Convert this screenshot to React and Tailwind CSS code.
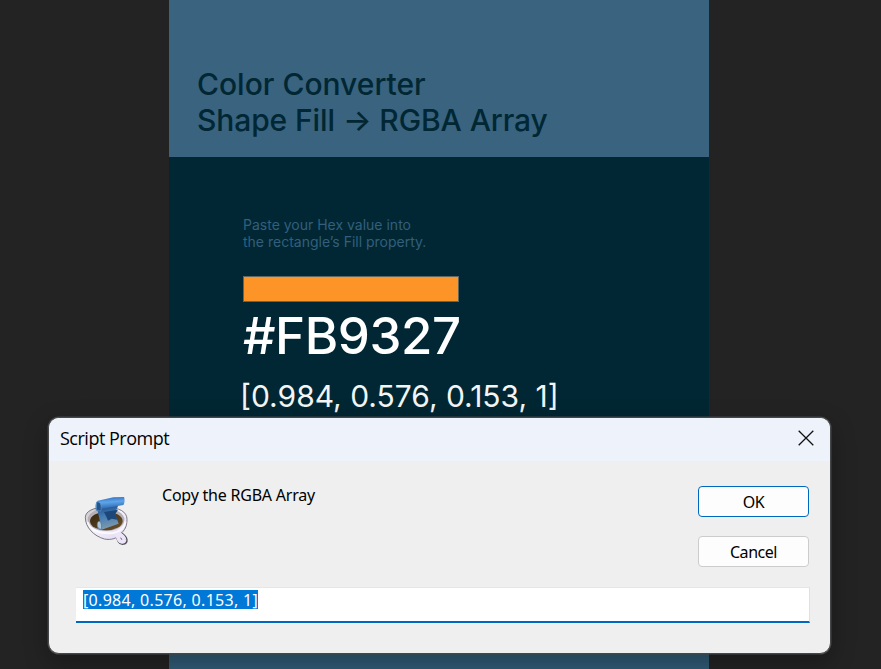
function CupIcon() {
  return (
    <svg width="64" height="70" viewBox="0 0 192 210" className="block">
      <defs>
        <linearGradient id="cup" x1="0" y1="0" x2="1" y2="1">
          <stop offset="0" stopColor="#c4c2c8" />
          <stop offset=".45" stopColor="#f6f3fd" />
          <stop offset="1" stopColor="#ddd5f0" />
        </linearGradient>
        <linearGradient id="roll" x1="0" y1="0" x2=".15" y2="1">
          <stop offset="0" stopColor="#2a64b4" />
          <stop offset=".4" stopColor="#5fa5ea" />
          <stop offset="1" stopColor="#1a529c" />
        </linearGradient>
        <linearGradient id="sheet" x1="0" y1="0" x2=".2" y2="1">
          <stop offset="0" stopColor="#1b457c" />
          <stop offset=".45" stopColor="#3f79b4" />
          <stop offset="1" stopColor="#7c99ae" />
        </linearGradient>
        <linearGradient id="coffee" x1="0" y1="0" x2="1" y2="1">
          <stop offset="0" stopColor="#33240e" />
          <stop offset="1" stopColor="#6d5329" />
        </linearGradient>
      </defs>
      <path d="M123 144C127 150 129 158 132 164C136 171 148 170 147 162C146 153 137 148 128 142" fill="none" stroke="#4e4955" strokeWidth="16" strokeLinecap="round" strokeLinejoin="round" />
      <path d="M28 94C28 76 52 64 88 64C130 64 153 77 153 100C153 122 146 133 133 144C124 157 106 163 85 159C54 150 28 125 28 94Z" fill="url(#cup)" stroke="#68636e" strokeWidth="2.5" />
      <path d="M121 143C125 149 127 157 130 163C134 170 147 168 145 161C144 153 135 148 126 141" fill="none" stroke="#ece5f8" strokeWidth="12" strokeLinecap="round" strokeLinejoin="round" />
      <ellipse cx="90" cy="101" rx="55" ry="34" fill="#b5afb4" />
      <ellipse cx="91" cy="105" rx="49" ry="28" fill="url(#coffee)" />
      <path d="M35 108C43 135 75 145 112 141C133 137 146 124 149 107" fill="none" stroke="#fff" strokeWidth="6" opacity=".75" />
      <path d="M61 58L126 60L117 83L128 113L77 131C67 133 61 123 64 112L72 106Z" fill="url(#sheet)" />
      <path d="M84 78L126 71L118 84L124 101L107 98L96 104L91 92Z" fill="#1d4778" />
      <path d="M65 109C70 100 79 109 76 130C67 130 61 121 65 109Z" fill="#a9c4d8" stroke="#49728f" strokeWidth="2" />
      <path d="M65 44L112 34L144 33C147 39 146 52 142 57L77 68L74 77L60 73C57 60 58 49 65 44Z" fill="url(#roll)" />
      <path d="M62 49C71 44 79 56 74 76L61 72Z" fill="#255488" stroke="#6499cf" strokeWidth="2" />
    </svg>
  );
}

const inter = "font-['Inter',sans-serif] whitespace-nowrap";
const noto = "font-['Noto_Sans',sans-serif] whitespace-nowrap";

export default function App() {
  return (
    <div className="relative flex h-[669px] w-[881px] justify-center overflow-hidden bg-[#232323] pr-[3px]">
      <main className={`flex w-[540px] flex-col bg-[#002733] ${inter}`}>
        <header className="h-[157px] shrink-0 bg-[#39637f] pt-[66px] pl-7">
          <h1 className="text-[30px] leading-9 font-medium text-[#002733]">
            Color Converter
            <br />
            <span className="tracking-[-0.1px]">Shape Fill → RGBA Array</span>
          </h1>
        </header>
        <section className="flex flex-1 flex-col items-start pt-[59px] pl-[74px]">
          <p className="text-[14px] leading-[17px] text-[#335f7c]">
            Paste your Hex value into
            <br />
            the rectangle’s Fill property.
          </p>
          <div className="mt-[26px] h-[26px] w-[216px] border border-[#5d6660] bg-[#fd9428]" />
          <div className="mt-[3px] text-[51px] leading-[62px] font-medium tracking-[-0.45px] text-white">#FB9327</div>
          <div className="-ml-[3px] mt-[11px] text-[30px] leading-9 text-[#f4f6f6]">[0.984, 0.576, 0.153, 1]</div>
        </section>
        <footer className="h-[100px] shrink-0 bg-[#315a75]" />
      </main>

      <div role="dialog" className={`absolute top-[417px] left-[48px] flex h-[237px] w-[783px] flex-col overflow-hidden rounded-[11px] border border-[#454748] bg-[#efefef] text-black shadow-[0_0_0_0.5px_#454748,0_8px_24px_rgba(0,0,0,0.3)] ${noto}`}>
        <div className="flex h-[43px] shrink-0 items-center justify-between bg-[#eef3fb] pr-[16px] pb-[3px] pl-[11px]">
          <span className="font-['Open_Sans',sans-serif] text-[18px] leading-5 tracking-[-0.5px]">Script Prompt</span>
          <svg width="16" height="16" viewBox="0 0 16 16" stroke="#111" strokeWidth="1.3" className="block">
            <path d="M.7.7l14.6 14.6M15.3.7L.7 15.3" />
          </svg>
        </div>
        <div className="flex h-[126px] shrink-0 pt-[25px] pr-[21px] pl-[27px]">
          <CupIcon />
          <p className="-mt-px ml-[22px] flex-1 text-[16px] leading-5 tracking-[-0.22px]">Copy the RGBA Array</p>
          <div className="flex w-[111px] flex-col gap-[19px] text-[16px] tracking-[-0.45px]">
            <button className="h-[31px] rounded-[4px] border border-[#0067c0] bg-[#fdfdfd]">OK</button>
            <button className="h-[31px] rounded-[4px] border border-[#cccccc] bg-[#fdfdfd]">Cancel</button>
          </div>
        </div>
        <div className="ml-[27px] flex h-9 w-[734px] items-start border-t border-r border-b-2 border-t-[#e6e6e6] border-r-[#dde0e5] border-b-[#0067c0] bg-white pt-[2px] pl-[7px]">
          <span className="h-[19px] w-[175px] bg-[#0078d7] text-[16px] leading-[21px] tracking-[0.31px] text-white">[0.984, 0.576, 0.153, 1]</span>
        </div>
      </div>
    </div>
  );
}
